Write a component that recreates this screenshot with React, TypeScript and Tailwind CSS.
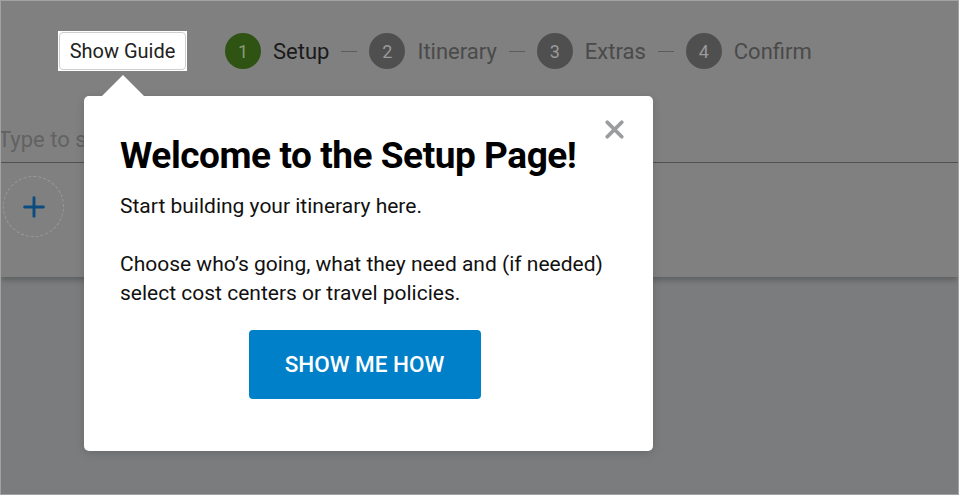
import { X, Plus } from "lucide-react";

const STEPS = [
  { n: 1, label: "Setup", active: true },
  { n: 2, label: "Itinerary", active: false },
  { n: 3, label: "Extras", active: false },
  { n: 4, label: "Confirm", active: false },
];

function Stepper() {
  return (
    <div className="flex items-center">
      {STEPS.map((s, i) => (
        <div key={s.n} className="flex items-center">
          {i > 0 && <span className="mx-[12px] h-px w-[16px] bg-[#5c5c5c]" />}
          <span
            className={
              s.active
                ? "flex h-[36px] w-[36px] items-center justify-center rounded-full bg-[#2f5312] text-[18px] text-[#8c9a78]"
                : "flex h-[36px] w-[36px] items-center justify-center rounded-full bg-[#4f4f4f] text-[18px] text-[#9a9a9a]"
            }
          >
            {s.n}
          </span>
          <span
            className={
              s.active
                ? "ml-[12px] text-[22px] text-[#1a1a1a]"
                : "ml-[12px] text-[22px] text-[#4a4a4a]"
            }
          >
            {s.label}
          </span>
        </div>
      ))}
    </div>
  );
}

export default function App() {
  return (
    <div
      className="relative h-[495px] w-[959px] overflow-hidden border border-[#a2a2a2] bg-[#7b7c7e]"
      style={{ fontFamily: "Roboto, 'Liberation Sans', sans-serif" }}
    >
      {/* page card, dimmed */}
      <div className="h-[276px] bg-[#808080] shadow-[0_3px_6px_rgba(0,0,0,0.25)]">
        <div className="flex items-center pl-[57px] pt-[30px]">
          <div className="bg-white p-px">
            <button className="flex h-[38px] w-[127px] items-center justify-center rounded-[4px] border border-[#cfcfcf] bg-white text-[20px] text-[#222]">
              Show Guide
            </button>
          </div>
          <div className="ml-[38px]">
            <Stepper />
          </div>
        </div>
        <div className="ml-[-3px] mt-[49px] h-[43px] border-b border-[#505050] text-[22px] leading-[40px] text-[#626262]">
          Type to search...
        </div>
        <div className="ml-[2px] mt-[13px] flex h-[61px] w-[61px] items-center justify-center rounded-full border-[1.5px] border-dashed border-[#9a9a9a]">
          <Plus className="h-[32px] w-[32px] text-[#0c4c80]" strokeWidth={2.2} />
        </div>
      </div>

      {/* guide popover */}
      <div className="absolute left-[83px] top-[95px] h-[355px] w-[569px] rounded-[5px] bg-white px-[36px] pt-[38px] shadow-[0_2px_10px_rgba(0,0,0,0.15)]">
        <span className="absolute left-[17px] top-[-21px] h-0 w-0 border-x-[22px] border-b-[22px] border-x-transparent border-b-white" />
        <button className="absolute right-[24px] top-[19px] text-[#9a9ca0]">
          <X className="h-[29px] w-[29px]" strokeWidth={3.2} />
        </button>
        <h2 className="text-[37px] font-bold leading-[44px] tracking-[-0.45px] text-[#000]">
          Welcome to the Setup Page!
        </h2>
        <p className="mt-[14px] text-[21px] leading-[29px] text-[#111]">
          Start building your itinerary here.
          <br />
          <br />
          Choose who’s going, what they need and (if needed) select cost centers or travel policies.
        </p>
        <div className="mt-[22px] flex justify-center pr-[8px]">
          <button className="h-[69px] w-[232px] rounded-[4px] bg-[#0080c9] text-[22.5px] font-medium text-white">
            SHOW ME HOW
          </button>
        </div>
      </div>
    </div>
  );
}
